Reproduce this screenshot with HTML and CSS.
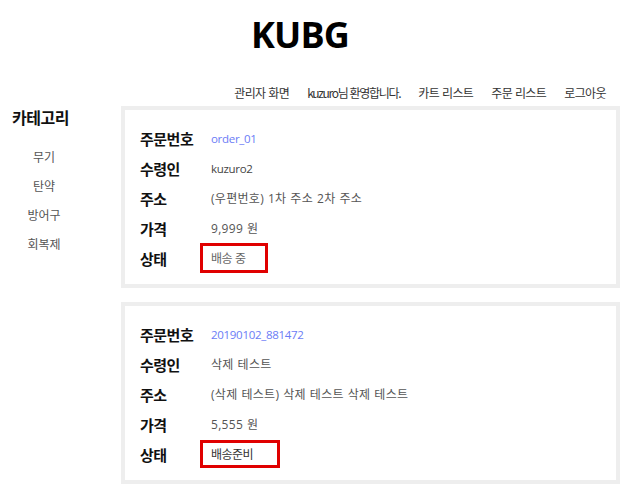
FILE: index.html
```html
<!DOCTYPE html>
<html lang="ko">
<head>
<meta charset="utf-8">
<title>KUBG</title>
<link rel="stylesheet" href="styles.css">
</head>
<body>
<header class="header">
  <h1 class="logo">KUBG</h1>
</header>
<nav class="topnav">
  <a class="topnav-link" href="#">관리자 화면</a>
  <span class="topnav-link topnav-welcome">kuzuro님 환영합니다.</span>
  <a class="topnav-link" href="#">카트 리스트</a>
  <a class="topnav-link" href="#">주문 리스트</a>
  <a class="topnav-link" href="#">로그아웃</a>
</nav>
<div class="main">
  <aside class="sidebar">
    <h3 class="sidebar-title">카테고리</h3>
    <ul class="cat-list">
      <li class="cat-item">무기</li>
      <li class="cat-item">탄약</li>
      <li class="cat-item">방어구</li>
      <li class="cat-item">회복제</li>
    </ul>
  </aside>
  <section class="orders">
    <div class="order-card">
      <div class="row"><span class="label">주문번호</span><a class="value link" href="#">order_01</a></div>
      <div class="row"><span class="label">수령인</span><span class="value">kuzuro2</span></div>
      <div class="row"><span class="label">주소</span><span class="value value-ko">(우편번호) 1차 주소 2차 주소</span></div>
      <div class="row"><span class="label">가격</span><span class="value value-ko">9,999 원</span></div>
      <div class="row"><span class="label">상태</span><span class="status status-a">배송 중</span></div>
    </div>
    <div class="order-card">
      <div class="row"><span class="label">주문번호</span><a class="value link" href="#">20190102_881472</a></div>
      <div class="row"><span class="label">수령인</span><span class="value value-ko">삭제 테스트</span></div>
      <div class="row"><span class="label">주소</span><span class="value value-ko">(삭제 테스트) 삭제 테스트 삭제 테스트</span></div>
      <div class="row"><span class="label">가격</span><span class="value value-ko">5,555 원</span></div>
      <div class="row"><span class="label">상태</span><span class="status status-b">배송준비</span></div>
    </div>
  </section>
</div>
</body>
</html>
```
FILE: styles.css
```css
* { box-sizing: border-box; }
html, body { margin: 0; padding: 0; background: #fff; }
body {
  font-family: "Open Sans", "Noto Sans CJK KR", sans-serif;
  color: #333;
  width: 640px;
}
.header { width: 600px; text-align: center; }
.logo {
  margin: 17px 0 0;
  font-size: 36px;
  line-height: 36px;
  font-weight: 700;
  color: #000;
  letter-spacing: -0.8px;
}
.topnav {
  margin-top: 30px;
  height: 20px;
  display: flex;
  justify-content: flex-end;
  gap: 18px;
  padding-right: 34px;
  font-family: "Noto Sans CJK KR", sans-serif;
  font-size: 12px;
  line-height: 20px;
  letter-spacing: -0.6px;
}
.topnav-link { color: #333; text-decoration: none; }
.topnav-welcome { letter-spacing: -1.3px; }
.main {
  margin-top: 3px;
  display: flex;
  padding-left: 8px;
}
.sidebar { width: 113px; flex: none; }
.sidebar-title {
  margin: 0;
  width: 72px;
  padding-left: 4px;
  font-family: "Noto Sans CJK KR", sans-serif;
  font-size: 16px;
  line-height: 22px;
  font-weight: 700;
  color: #111;
  letter-spacing: -0.5px;
}
.cat-list {
  list-style: none;
  margin: 14px 0 0;
  padding: 0;
  width: 72px;
  text-align: center;
  font-family: "Noto Sans CJK KR", sans-serif;
  font-size: 12px;
  line-height: 29px;
  color: #555;
}
.orders {
  width: 499px;
  display: flex;
  flex-direction: column;
  gap: 14px;
}
.order-card {
  border: 4px solid #eeeeee;
  padding: 13px 15px 11px;
  height: 182px;
}
.row {
  display: grid;
  grid-template-columns: 60px 1fr;
  align-items: center;
  height: 30px;
}
.label {
  font-family: "Noto Sans CJK KR", sans-serif;
  font-size: 15px;
  font-weight: 700;
  color: #111;
  letter-spacing: -0.5px;
}
.value {
  padding-left: 11px;
  font-family: "Open Sans", "Noto Sans CJK KR", sans-serif;
  font-size: 11.5px;
  color: #444;
  letter-spacing: -0.3px;
  justify-self: start;
}
.value-ko {
  font-size: 12px;
  letter-spacing: 0.3px;
  word-spacing: 0.5px;
  color: #555;
}
.link { color: #6b7cf6; text-decoration: none; }
.status {
  justify-self: start;
  border: 3px solid #e00000;
  padding: 0 20px 0 8px;
  height: 30px;
  line-height: 24px;
  font-family: "Noto Sans CJK KR", sans-serif;
  font-size: 12px;
  color: #666;
  letter-spacing: -0.5px;
}
.status-b { height: 28px; line-height: 22px; padding-right: 24px; color: #333; }
```
